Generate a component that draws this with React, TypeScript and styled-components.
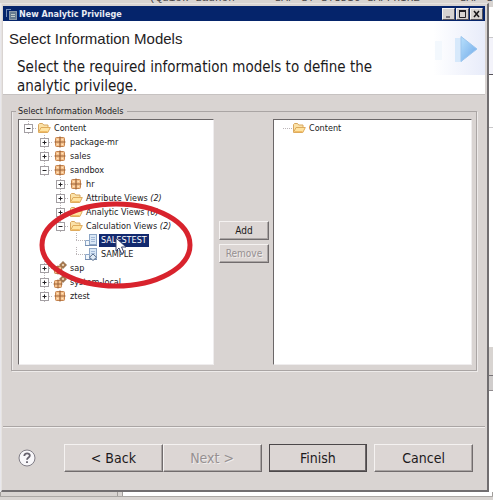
import React from "react";
import styled, { createGlobalStyle, css } from "styled-components";

const Global = createGlobalStyle`
  * { box-sizing: border-box; }
  body { margin: 0; background: #d8d4d1; font-family: "DejaVu Sans Condensed", "DejaVu Sans", sans-serif; color: #1c1a1c; }
  button { font-family: inherit; color: inherit; }
`;

const ui = css`
  font-family: "DejaVu Sans Condensed", "Noto Sans", sans-serif;
`;

const small = css`
  ${ui}
  font-size: 9px;
  font-weight: 400;
`;

const Desktop = styled.div`
  position: relative;
  display: flex;
  flex-direction: column;
  min-height: 100vh;
  background: #d8d4d1;
  overflow: hidden;
`;

const TopStrip = styled.div`
  display: flex;
  align-items: flex-end;
  justify-content: flex-end;
  gap: 40px;
  height: 3px;
  overflow: hidden;
  white-space: nowrap;
  font: 11px/10px "Liberation Mono", monospace;
  color: #4a4648;
`;

const Middle = styled.div`
  display: grid;
  grid-template-columns: 1px minmax(0, 1fr) 4px;
`;

const LeftSliver = styled.div`
  background: #e9e8ec;
`;

const RightSliver = styled.div`
  display: flex;
  flex-direction: column;
  background: #fff;
`;

const Patch = styled.div<{ $h: number; $bg: string; $line?: string }>`
  height: ${(p) => p.$h}px;
  background: ${(p) => p.$bg};
  border-bottom: ${(p) => (p.$line ? `1px solid ${p.$line}` : "0")};
`;

const BottomStrip = styled.div`
  display: grid;
  grid-template-columns: 118px 1fr;
  column-gap: 4px;
  height: 5px;
  border-bottom: 1px solid #aaa7a4;
`;

const BottomPane = styled.div<{ $light?: boolean }>`
  background: ${(p) => (p.$light ? "#fff" : "#d8d4d1")};
  border-left: 1px solid #a19e9b;
  border-right: 1px solid #a19e9b;
`;

const Dialog = styled.section`
  background: #d9d4d2;
  border: 1px solid #e6e3e1;
  border-right: 2px solid #716e70;
  border-bottom: 2px solid #716e70;
  padding: 2px 2px 0 1px;
`;

const TitleBar = styled.header`
  display: flex;
  align-items: center;
  height: 15px;
  padding: 0 2px 0 3px;
  background: #05246b;
  color: #e8ebf4;
`;

const Title = styled.h1`
  ${ui}
  flex: 1;
  margin: 0 0 0 2px;
  font-size: 9px;
  line-height: 14px;
  font-weight: 700;
`;

const Caption = styled.button`
  display: flex;
  width: 13px;
  height: 12px;
  padding: 0;
  border: 1px solid;
  border-color: #f4f2f2 #55525a #55525a #f4f2f2;
  background: #d6d2d0;

  & + & { margin-left: 1px; }
`;

const Intro = styled.div`
  display: grid;
  grid-template-columns: minmax(0, 1fr) 52px;
  height: 74px;
  background: #fff;
  border-bottom: 1px solid #c6c2c1;
`;

const IntroText = styled.div`
  padding: 8px 32px 0 6px;
`;

const Heading = styled.h2`
  margin: 0;
  font: 400 15px/20px "Liberation Sans", Arial, sans-serif;
  color: #242224;
`;

const Message = styled.p`
  ${ui}
  margin: 9px 0 0 8px;
  font-size: 15px;
  line-height: 19px;
`;

const Group = styled.fieldset`
  ${ui}
  display: grid;
  grid-template-columns: 196fr 59px 199fr;
  min-width: 0;
  margin: 10px 8px 0 8px;
  padding: 2px 4px 5px 6px;
  border: 1px solid #aaa5a4;
  box-shadow: 1px 1px 0 #eeebea, inset 1px 0 0 #eeebea;
`;

const Legend = styled.legend`
  ${small}
  margin-left: -2px;
  padding: 0 3px 0 2px;
  line-height: 12px;
`;

const Pane = styled.div`
  height: 246px;
  padding: 1px 0 0 4px;
  background: #fff;
  border: 1px solid;
  border-color: #6b6768 #efedee #efedee #6b6768;
  overflow: hidden;
`;

const Tree = styled.ul`
  margin: 0;
  padding: 0;
  list-style: none;
`;

const Item = styled.li<{ $depth: number; $lead?: number }>`
  display: flex;
  align-items: center;
  height: 14px;
  padding-left: ${(p) => p.$depth * 16 + (p.$lead || 0)}px;
  white-space: nowrap;
`;

const Label = styled.span<{ $selected?: boolean }>`
  ${small}
  margin-left: 1px;
  padding: 0 2px;
  line-height: 13px;
  background: ${(p) => (p.$selected ? "#12296f" : "transparent")};
  color: ${(p) => (p.$selected ? "#fff" : "inherit")};
`;

const Toggle = styled.button`
  display: flex;
  padding: 0;
  border: 0;
  background: none;
`;

const Transfer = styled.div`
  display: flex;
  flex-direction: column;
  gap: 4px;
  padding: 102px 4px 0 5px;
`;

const PushButton = styled.button<{ $size?: "small" | "large"; $primary?: boolean }>`
  ${ui}
  flex: ${(p) => (p.$size === "small" ? "none" : "1 1 0")};
  height: ${(p) => (p.$size === "small" ? 19 : 28)}px;
  padding: 0;
  font-size: ${(p) => (p.$size === "small" ? 10 : 14)}px;
  background: #dcd6d4;
  border: 1px solid;
  border-color: ${(p) => (p.$primary ? "#4c484a" : "#f5f2f1 #716c6d #716c6d #f5f2f1")};
  box-shadow: inset -1px -1px 0 ${(p) => (p.$primary ? "#6b6667" : "#aaa5a4")};

  &:disabled { color: #969091; text-shadow: 1px 1px 0 #f0edec; }
`;

const Footer = styled.footer`
  display: flex;
  align-items: center;
  height: 64px;
  margin-top: 55px;
  padding: 0 12px 2px 15px;
  border-top: 1px solid #aaa5a4;
  box-shadow: inset 0 1px 0 #f2efee;
`;

const Help = styled.button`
  display: flex;
  margin-right: 28px;
  padding: 0;
  border: 0;
  background: none;
`;

const Actions = styled.div`
  display: grid;
  flex: 1;
  grid-template-columns: 2fr 1fr 1fr;
  gap: 7px;
`;

const StepPair = styled.div`
  display: flex;
`;

const Ring = styled.svg`
  position: absolute;
  left: 38px;
  top: 199px;
  pointer-events: none;
`;

const SelectedRow = styled.span`
  position: relative;
  display: flex;
`;

const Pointer = styled.svg`
  position: absolute;
  left: 17px;
  top: 3px;
`;

function Expander({ open, name }: { open: boolean; name: string }) {
  return (
    <Toggle type="button" aria-label={(open ? "Collapse " : "Expand ") + name} aria-expanded={open}>
      <svg width="14" height="14" viewBox="0 0 14 14">
        <path d="M10 7.500h4M5.500 0v3M5.500 12v2" stroke="#bbb5b8" strokeDasharray="1 1" />
        <rect x="1.500" y="3.500" width="8" height="8" fill="#fff" stroke="#a39fa3" />
        <path d={open ? "M3.500 7.500h4" : "M3.500 7.500h4M5.500 5.500v4"} stroke="#252326" />
      </svg>
    </Toggle>
  );
}

function Folder() {
  return (
    <svg width="14" height="14" viewBox="0 0 14 14">
      <path d="M1.500 11V3.500l1-1h3l1.200 1.500H11V6" fill="#fbe2a8" stroke="#d8a75f" />
      <path d="M1.500 11.500 4 6.500h9.300L10.800 11.500z" fill="#ffe3a0" stroke="#dfab5c" />
      <path d="M3 10.500h7.500" stroke="#f0bd68" />
    </svg>
  );
}

function Package() {
  return (
    <svg width="14" height="14" viewBox="0 0 14 14">
      <rect x="2.500" y="2.500" width="9" height="9" rx="1" fill="#f6c28d" stroke="#c4834e" />
      <path d="M7 1.500v11M1.500 7h11" stroke="#9c6237" strokeWidth="1.200" />
      <path d="M4 4.500h1.500M8.500 4.500H10M4 9.500h1.500M8.500 9.500H10" stroke="#ffe3bd" />
    </svg>
  );
}

function SystemPackage() {
  return (
    <svg width="14" height="14" viewBox="0 0 14 14">
      <rect x="1.500" y="5.500" width="7" height="7" rx="1" fill="#f6c28d" stroke="#c4834e" />
      <path d="M5 4.500v9M.5 9h9" stroke="#9c6237" />
      <circle cx="10" cy="4" r="2.500" fill="#c98a50" stroke="#94704f" />
      <path d="M10 0v8M6 4h8" stroke="#94704f" />
      <circle cx="10" cy="4" r="1" fill="#f7e5cd" />
    </svg>
  );
}

function CalcView({ badge }: { badge?: boolean }) {
  return (
    <svg width="22" height="14" viewBox="0 0 22 14">
      <path d="M0 7.500h10M.5 0v7" stroke="#bbb5b8" strokeDasharray="1 1" />
      <rect x="13.500" y="1.500" width="7" height="10" fill="#d9e7f5" stroke="#8da6c6" />
      <path d="M15 4.500h4M15 6.500h4M15 8.500h4" stroke="#a3b9d8" />
      <path d="M9.500 7.500h4v5h-4z" fill="#f1f6fb" stroke="#8da6c6" />
      <path d="M9 12.500h12" stroke="#758db0" />
      {badge && <path d="m17 7 3.500 3.300L17 13.500l-3.500-3.200z" fill="#dfeaf5" stroke="#5d718d" />}
    </svg>
  );
}

type Node = { name: string; depth: number; kind: "folder" | "package" | "system"; open?: boolean; count?: number };

const upper: Node[] = [
  { name: "Content", depth: 0, kind: "folder", open: true },
  { name: "package-mr", depth: 1, kind: "package" },
  { name: "sales", depth: 1, kind: "package" },
  { name: "sandbox", depth: 1, kind: "package", open: true },
  { name: "hr", depth: 2, kind: "package" },
  { name: "Attribute Views", depth: 2, kind: "folder", count: 2 },
  { name: "Analytic Views", depth: 2, kind: "folder", count: 6 },
  { name: "Calculation Views", depth: 2, kind: "folder", open: true, count: 2 },
];

const lower: Node[] = [
  { name: "sap", depth: 1, kind: "system" },
  { name: "system-local", depth: 1, kind: "system" },
  { name: "ztest", depth: 1, kind: "package" },
];

const icons = { folder: Folder, package: Package, system: SystemPackage };

function Row({ node }: { node: Node }) {
  const Icon = icons[node.kind];
  return (
    <Item $depth={node.depth}>
      <Expander open={!!node.open} name={node.name} />
      <Icon />
      <Label>
        {node.name}
        {node.count !== undefined && <i> ({node.count})</i>}
      </Label>
    </Item>
  );
}

export default function App() {
  return (
    <Desktop>
      <Global />
      <TopStrip aria-hidden="true">
        <span>(Quick Launch</span>
        <span>SAP ST STUDIO SAPPHIRE</span>
        <span>SAP S</span>
      </TopStrip>
      <Middle>
        <LeftSliver />
        <Dialog aria-label="New Analytic Privilege">
          <TitleBar>
            <svg width="11" height="12" viewBox="0 0 11 12">
              <path d="M.5 1v8M.5 1.500H5" stroke="#768db7" />
              <rect x="3.500" y="3.500" width="7" height="8" fill="#697d91" stroke="#8b99a8" />
              <path d="M5 6.500h4M5 8.500h4" stroke="#c3ccc9" />
            </svg>
            <Title>New Analytic Privilege</Title>
            <Caption type="button" aria-label="Minimize">
              <svg width="11" height="10"><path d="M3 8h4" stroke="#77737a" strokeWidth="2" /></svg>
            </Caption>
            <Caption type="button" aria-label="Maximize">
              <svg width="11" height="10"><path d="M2.500 2v6.500h6V2" fill="none" stroke="#232126" /><path d="M2 2h7" stroke="#232126" strokeWidth="2" /></svg>
            </Caption>
            <Caption type="button" aria-label="Close">
              <svg width="11" height="10"><path d="m3 2 5 6M8 2 3 8" stroke="#161418" strokeWidth="1.500" /></svg>
            </Caption>
          </TitleBar>
          <Intro>
            <IntroText>
              <Heading>Select Information Models</Heading>
              <Message>Select the required information models to define the analytic privilege.</Message>
            </IntroText>
            <svg width="52" height="54" viewBox="0 0 52 54">
              <defs>
                <linearGradient id="haze"><stop stopColor="#fff" /><stop offset="1" stopColor="#e8ecfa" /></linearGradient>
                <linearGradient id="arrow" x2="1" y2="1"><stop stopColor="#b8e0fc" /><stop offset="1" stopColor="#6ea8e8" /></linearGradient>
              </defs>
              <rect width="52" height="54" fill="url(#haze)" />
              <rect x="2" y="20" width="7" height="19" fill="#f3f8fd" />
              <path d="M22 17h7v24h-7z" fill="#d7e9fb" />
              <path d="M28 15.500 44 28 28 40.500z" fill="url(#arrow)" stroke="#9bc5ee" strokeLinejoin="round" />
            </svg>
          </Intro>
          <Group>
            <Legend>Select Information Models</Legend>
            <Pane>
              <Tree>
                {upper.map((n) => <Row key={n.name} node={n} />)}
                <Item $depth={3} $lead={5}>
                  <CalcView />
                  <SelectedRow>
                    <Label $selected>SALESTEST</Label>
                    <Pointer width="12" height="18" viewBox="0 0 12 18">
                      <path d="M1 1v13l3-3 2.500 5.500 2.500-1L6.500 10H11z" fill="#fff" stroke="#35406d" />
                    </Pointer>
                  </SelectedRow>
                </Item>
                <Item $depth={3} $lead={5}>
                  <CalcView badge />
                  <Label>SAMPLE</Label>
                </Item>
                {lower.map((n) => <Row key={n.name} node={n} />)}
              </Tree>
            </Pane>
            <Transfer>
              <PushButton type="button" $size="small">Add</PushButton>
              <PushButton type="button" $size="small" disabled>Remove</PushButton>
            </Transfer>
            <Pane>
              <Tree>
                <Item $depth={0} $lead={4}>
                  <svg width="10" height="14"><path d="M1 7.500h9" stroke="#bbb5b8" strokeDasharray="1 1" /></svg>
                  <Folder />
                  <Label>Content</Label>
                </Item>
              </Tree>
            </Pane>
          </Group>
          <Footer>
            <Help type="button" aria-label="Help">
              <svg width="18" height="18" viewBox="0 0 18 18">
                <circle cx="9" cy="9" r="8" fill="#f8f7fa" stroke="#807d86" />
                <path d="M6.300 7c0-3.600 5.700-3.300 5.500-.3C11.700 8.500 9 8.500 9 10.800M9 12.200V14" fill="none" stroke="#65616d" strokeWidth="1.800" />
              </svg>
            </Help>
            <Actions>
              <StepPair>
                <PushButton type="button">&lt; Back</PushButton>
                <PushButton type="button" disabled>Next &gt;</PushButton>
              </StepPair>
              <PushButton type="button" $primary>Finish</PushButton>
              <PushButton type="button">Cancel</PushButton>
            </Actions>
          </Footer>
        </Dialog>
        <RightSliver>
          <Patch $h={4} $bg="#d8d4d1" />
          <Patch $h={31} $bg="#fff" $line="#c9c8ca" />
          <Patch $h={37} $bg="#f3f3fa" $line="#56535a" />
          <Patch $h={53} $bg="#fff" $line="#c9c8ca" />
          <Patch $h={219} $bg="#fff" />
          <Patch $h={29} $bg="#d8d4d1" $line="#777377" />
          <Patch $h={15} $bg="#d0cdcc" $line="#8f8b8e" />
        </RightSliver>
      </Middle>
      <BottomStrip>
        <BottomPane />
        <BottomPane $light />
      </BottomStrip>
      <Ring width="158" height="94" viewBox="0 0 158 94">
        <ellipse cx="78" cy="46" rx="74" ry="41" fill="none" stroke="#d8232d" strokeWidth="5" />
      </Ring>
    </Desktop>
  );
}
